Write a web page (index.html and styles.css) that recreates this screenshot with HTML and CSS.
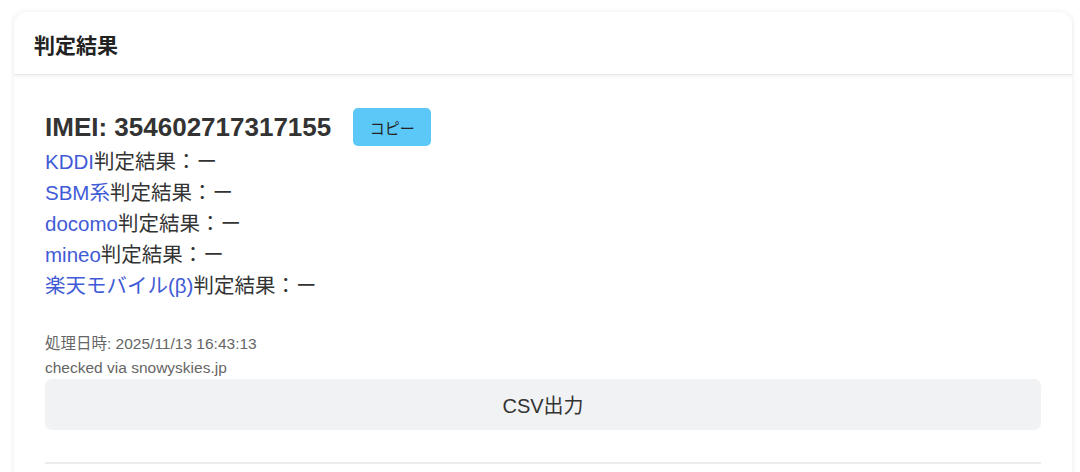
FILE: index.html
```html
<!DOCTYPE html>
<html lang="ja">
<head>
    <meta charset="UTF-8">
    <meta name="viewport" content="width=device-width, initial-scale=1.0">
    <title>判定結果</title>
    <link rel="stylesheet" href="styles.css">
</head>
<body>
    <div class="card">
        <div class="card-header">
            <h2>判定結果</h2>
        </div>

        <div class="card-body">
            <div class="imei-row">
                <span class="imei">IMEI: 354602717317155</span>
                <button class="copy-btn">コピー</button>
            </div>
            <ul class="results">
                <li><a href="#">KDDI</a>判定結果：ー</li>
                <li><a href="#">SBM系</a>判定結果：ー</li>
                <li><a href="#">docomo</a>判定結果：ー</li>
                <li><a href="#">mineo</a>判定結果：ー</li>
                <li><a href="#">楽天モバイル(β)</a>判定結果：ー</li>
            </ul>

            <div class="meta">
                <p>処理日時: 2025/11/13 16:43:13</p>
                <p>checked via snowyskies.jp</p>
            </div>

            <button class="csv-btn">CSV出力</button>

            <hr class="divider">
        </div>
    </div>
</body>
</html>
```

FILE: styles.css
```css
:root {
    --text-color: #333;
    --link-color: #3f5bd6;
    --muted: #666;
    --copy-bg: #5bc8f7;
    --btn-gray: #f1f2f4;
    --border-color: #ececec;
}

* {
    margin: 0;
    padding: 0;
    box-sizing: border-box;
}

body {
    font-family: 'Liberation Sans', Arial, 'Noto Sans CJK JP', sans-serif;
    background-color: #fff;
    color: var(--text-color);
    padding: 12px 8px 0 14px;
    overflow: hidden;
}

.card {
    background-color: white;
    border-radius: 14px;
    box-shadow: 0 0 6px rgba(0, 0, 0, 0.08);
    height: 480px;
}

.card-header {
    height: 63px;
    padding: 0 20px;
    display: flex;
    align-items: center;
    border-bottom: 1px solid #e8e8e8;
    box-shadow: 0 2px 3px rgba(0, 0, 0, 0.05);
}

.card-header h2 {
    font-size: 21px;
    font-weight: 700;
    color: #222;
    padding-top: 2px;
}

.card-body {
    padding: 33px 31px 0 31px;
}

.imei-row {
    display: flex;
    align-items: center;
    gap: 22px;
    height: 38px;
}

.imei {
    font-size: 26px;
    font-weight: 700;
    color: #333;
}

.copy-btn {
    width: 78px;
    height: 38px;
    background-color: var(--copy-bg);
    border: none;
    border-radius: 5px;
    font-family: 'Noto Sans CJK JP', sans-serif;
    font-size: 15px;
    color: #222;
}

.results {
    list-style: none;
}

.results li {
    font-size: 20.5px;
    line-height: 31px;
    color: var(--text-color);
}

.results a {
    color: var(--link-color);
    text-decoration: none;
}

.meta {
    margin-top: 31px;
}

.meta p {
    font-size: 15.5px;
    line-height: 24px;
    color: var(--muted);
}

.meta p:last-child {
    line-height: 23px;
}

.csv-btn {
    display: block;
    width: 100%;
    height: 51px;
    background-color: var(--btn-gray);
    border: none;
    border-radius: 7px;
    font-family: 'Liberation Sans', 'Noto Sans CJK JP', sans-serif;
    font-size: 20px;
    color: #333;
}

.divider {
    border: none;
    border-top: 2px solid var(--border-color);
    margin-top: 32px;
}
```
